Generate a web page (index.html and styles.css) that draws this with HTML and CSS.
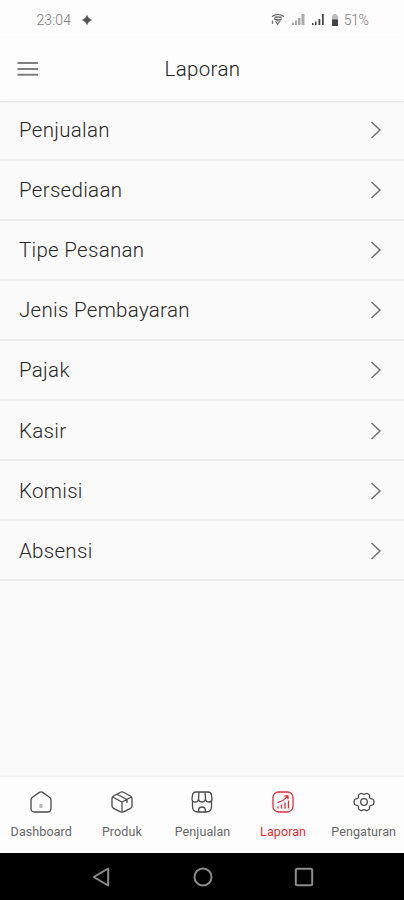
FILE: index.html
```
<!DOCTYPE html>
<html lang="id">
<head>
<meta charset="utf-8">
<title>Laporan</title>
<link rel="stylesheet" href="styles.css">
</head>
<body>
<div class="screen">
  <div class="status">
    <span class="time">23:04</span>
    <svg class="spark" width="12" height="12" viewBox="0 0 12 12"><path d="M6 .5Q7.200 4.800 11.500 6Q7.200 7.200 6 11.500Q4.800 7.200 .5 6Q4.800 4.800 6 .5Z" fill="#555"/></svg>
    <svg class="signals" width="70" height="14" viewBox="0 0 70 14">
      <g fill="none" stroke="#555" stroke-width="1.2"><path d="M1 3.500Q7 -.5 13 3.500M3 5.800Q7 8 11 5.800M3.500 4.200h7"/><path d="M1.500 7.500v3.500M4.500 8l2 3.500L9.500 7.500M6 7.500l1.500 1" stroke="#777"/></g>
      <path d="M21 12V9.500h2V12zM24 12V7.500h2V12zM27 12V5h2.500V12zM30.500 12V1h3V12z" fill="#aaa"/>
      <path d="M41 12v-2h1.500v2zM44 12V8.500h1.500V12zM47.500 12V6h1.800V12zM51 12V1h1.700V12z" fill="#444"/>
      <path d="M62.500 1h3v1.500h1.500V7H61V2.500H62.500z" fill="#bbb"/><path d="M61 6.500h6V13h-6z" fill="#444"/>
    </svg>
    <span class="battery">51%</span>
  </div>
  <header class="bar">
    <svg class="menu" width="22" height="16" viewBox="0 0 22 16"><path d="M.5 2h20.500M.5 8h20.500M.5 13.700h20.500" stroke="#808080" stroke-width="2"/></svg>
    <h1>Laporan</h1>
  </header>
  <main class="list">
    <a class="row"><span>Penjualan</span><svg width="12" height="20" viewBox="0 0 12 20"><path d="M1.500 2L10 10L1.500 18"/></svg></a>
    <a class="row"><span>Persediaan</span><svg width="12" height="20" viewBox="0 0 12 20"><path d="M1.500 2L10 10L1.500 18"/></svg></a>
    <a class="row"><span>Tipe Pesanan</span><svg width="12" height="20" viewBox="0 0 12 20"><path d="M1.500 2L10 10L1.500 18"/></svg></a>
    <a class="row"><span>Jenis Pembayaran</span><svg width="12" height="20" viewBox="0 0 12 20"><path d="M1.500 2L10 10L1.500 18"/></svg></a>
    <a class="row"><span>Pajak</span><svg width="12" height="20" viewBox="0 0 12 20"><path d="M1.500 2L10 10L1.500 18"/></svg></a>
    <a class="row"><span>Kasir</span><svg width="12" height="20" viewBox="0 0 12 20"><path d="M1.500 2L10 10L1.500 18"/></svg></a>
    <a class="row"><span>Komisi</span><svg width="12" height="20" viewBox="0 0 12 20"><path d="M1.500 2L10 10L1.500 18"/></svg></a>
    <a class="row"><span>Absensi</span><svg width="12" height="20" viewBox="0 0 12 20"><path d="M1.500 2L10 10L1.500 18"/></svg></a>
  </main>
  <nav class="tabs">
    <a class="tab"><svg width="24" height="24" viewBox="0 0 24 24"><path d="M2 10Q2 8.500 3.200 7.500L10 2.600Q12 1.200 14 2.600L20.800 7.500Q22 8.500 22 10V18.500Q22 22 18.500 22H5.500Q2 22 2 18.500Z"/><path d="M12 14v4" stroke="#bbb" stroke-width="3"/></svg><span>Dashboard</span></a>
    <a class="tab"><svg width="24" height="24" viewBox="0 0 24 24"><path d="M10.500 2.300Q12 1.500 13.500 2.300L20.500 6Q22 7 22 8.500V16Q22 17.500 20.500 18.300L13.500 21.800Q12 22.500 10.500 21.800L3.500 18.300Q2 17.500 2 16V8.500Q2 7 3.500 6ZM2.500 7L12 12L21.500 7M12 12V22M7 4.200L17 9.500V13"/></svg><span>Produk</span></a>
    <a class="tab"><svg width="24" height="24" viewBox="0 0 24 24"><path d="M6 2H18Q21 2 21.500 5L22 9Q22 12 18.800 12Q15.500 12 15.500 9Q15 12 12 12Q9 12 8.500 9Q8.500 12 5.200 12Q2 12 2 9L2.500 5Q3 2 6 2ZM9 2L8.500 9M15 2L15.500 9M2.500 11V16.500Q2.500 22 8 22H16Q21.500 22 21.500 16.500V11M8.700 22V19.500Q9 17 12 17Q15 17 15.300 19.500V22"/></svg><span>Penjualan</span></a>
    <a class="tab active"><svg width="24" height="24" viewBox="0 0 24 24"><rect x="2" y="2" width="20" height="20" rx="5.500"/><path d="M7 18.500V16.500M10.500 18.500V14.500M14 18.500V12.500M17.500 18.500V10.500M6.500 12.500Q13 11 16.500 6M13.500 6H17V9.300"/></svg><span>Laporan</span></a>
    <a class="tab"><svg width="24" height="24" viewBox="0 0 24 24"><circle cx="12" cy="12" r="3.300"/><path d="M8.700 3.500C10 2.700 10.400 4.300 12 4.300S14 2.700 15.300 3.500L17 4.500C18.300 5.300 17 6.700 17.800 8S20 8.700 21 9.300C22.300 10.200 22.300 13.800 21 14.700C20 15.300 18.600 14.700 17.800 16S18.300 18.700 17 19.500L15.300 20.500C14 21.300 13.600 19.700 12 19.700S10 21.300 8.700 20.500L7 19.500C5.700 18.700 7 17.300 6.200 16S4 15.300 3 14.700C1.700 13.800 1.700 10.200 3 9.300C4 8.700 5.400 9.300 6.200 8S5.700 5.300 7 4.500Z"/></svg><span>Pengaturan</span></a>
  </nav>
  <div class="system">
    <svg width="22" height="22" viewBox="0 0 22 22"><path d="M17.200 2.500V19.500L2.700 11Z"/></svg>
    <svg width="22" height="22" viewBox="0 0 22 22"><circle cx="11" cy="11" r="8.500"/></svg>
    <svg width="22" height="22" viewBox="0 0 22 22"><rect x="2.800" y="2.800" width="16.400" height="16.400" rx="1.500"/></svg>
  </div>
</div>
</body>
</html>
```
FILE: styles.css
```
* { box-sizing: border-box; }
body { margin: 0; font-family: Roboto, sans-serif; background: #fafafa; }
.screen { width: 404px; height: 900px; display: flex; flex-direction: column; overflow: hidden; }
.status { height: 38px; flex: none; display: flex; align-items: center; padding: 1px 35.5px 0 36.5px; background: #fdfdfd; color: #777; font-size: 14px; font-weight: 300; }
.time { width: 44.5px; letter-spacing: .1px; }
.signals { margin-left: auto; margin-right: 3px; }
.battery { letter-spacing: -.4px; }
.bar { height: 63px; flex: none; display: grid; grid-template-columns: 60px 1fr 60px; align-items: center; padding-bottom: 2px; background: #fdfdfd; box-shadow: 0 1px 2px #e2e2e2; z-index: 1; }
.menu { margin-left: 17px; }
.bar h1 { margin: 0; text-align: center; font-size: 20.5px; line-height: 24px; font-weight: 300; color: #222; letter-spacing: .35px; padding-left: 1px; }
.list { flex: 1; margin-top: -.5px; }
.row { height: 60.1px; display: flex; align-items: center; justify-content: space-between; padding: 1px 22px 0 19px; border-bottom: 2px solid #eee; font-size: 20.5px; font-weight: 300; color: #262626; letter-spacing: .3px; }
.row svg { fill: none; stroke: #707070; stroke-width: 1.5; }
.tabs { height: 76px; flex: none; display: grid; grid-template-columns: repeat(5, 1fr); background: #fdfdfd; box-shadow: 0 -1px 2px #eeeeee; padding-left: 1px; }
.tab { display: flex; flex-direction: column; align-items: center; padding-top: 13px; gap: 10px; color: #666; font-size: 12.5px; line-height: 16px; letter-spacing: .1px; }
.tab svg { fill: none; stroke: #4a4a4a; stroke-width: 1.3; stroke-linejoin: round; }
.tab.active { color: #dc3038; }
.tab.active svg { stroke: #dc3038; }
.system { height: 47px; flex: none; background: #000; display: flex; justify-content: center; align-items: center; gap: 79px; padding-left: 1px; }
.system svg { fill: none; stroke: #8c8c8c; stroke-width: 2; stroke-linejoin: round; }
```
